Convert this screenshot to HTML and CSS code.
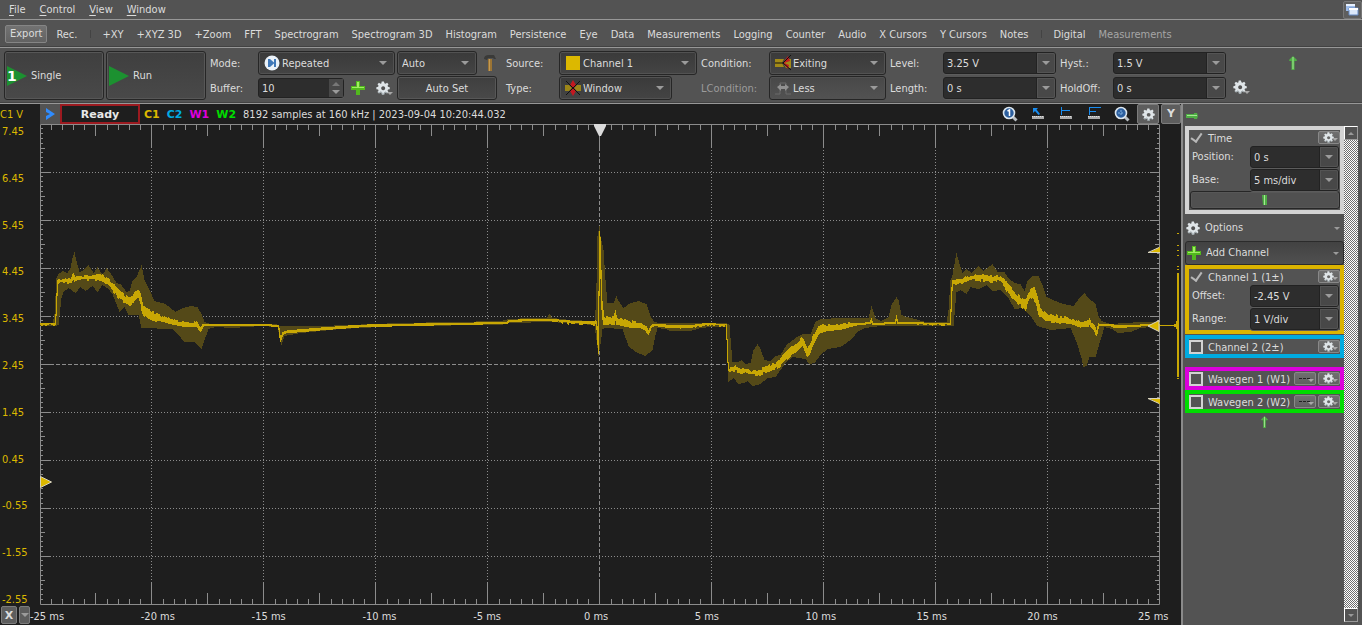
FILE: index.html
```html
<!DOCTYPE html>
<html lang="en">
<head>
<meta charset="utf-8">
<title>Scope</title>
<link rel="stylesheet" href="styles.css">
</head>
<body>
<svg class="defs" aria-hidden="true">
  <symbol id="gear" viewBox="0 0 16 16"><path fill-rule="evenodd" d="M6.500 0.500h2.600l.5 2 1.300.5 1.800-1.100 1.600 1.800-1.100 1.700.5 1.200 2 .4v2.300l-2 .4-.5 1.300 1.100 1.700-1.600 1.600-1.700-1.100-1.300.5-.4 2H6.800l-.4-2-1.300-.5-1.700 1.100-1.700-1.700 1.200-1.700-.5-1.200-2-.4V7l2-.4.5-1.200-1.200-1.700 1.700-1.600 1.700 1.100 1-.4zM8.200 6a2.300 2.300 0 1 0 .01 0z" fill="#dfe5e8"/><path d="M2.500 12.500l1.200 1 1.700-1 1.200.5.500 2.200h2l.5-2 1.300-.5 1.700 1" fill="none" stroke="#8d979c"/></symbol>
  <symbol id="plus" viewBox="0 0 14 14"><path d="M5 0h4v5h5v4H9v5H5V9H0V5h5z" fill="#52b81e"/><path d="M6 1h2v5h5v1H1V6h5z" fill="#a0ee62"/></symbol>
  <symbol id="arrow" viewBox="0 0 8 14"><path d="M4 0l4 4-.5 1H5.500v9h-3V5H.5L0 4z" fill="#4fae45"/><path d="M4 1v12" stroke="#a6e894"/></symbol>
  <symbol id="lens" viewBox="0 0 16 16"><path d="M10 10l4.500 4.500" stroke="#b9bec2" stroke-width="3"/><circle cx="7" cy="7" r="5.500" fill="#2c5f9f" stroke="#dce6ee" stroke-width="1.600"/></symbol>
</svg>

<nav class="menubar">
  <button><u>F</u>ile</button><button><u>C</u>ontrol</button><button><u>V</u>iew</button><button><u>W</u>indow</button>
  <button class="restore" aria-label="Restore window"><svg width="14" height="14" viewBox="0 0 14 14"><path d="M1 1h9v7H1z" fill="#9dbbe8"/><path d="M1 1h9v2H1z" fill="#e8f1ff"/><path d="M4 5h9v7H4z" fill="#dbe8fa" stroke="#6589c4"/><path d="M4 5h9v2H4z" fill="#fff"/></svg></button>
</nav>

<nav class="views">
  <button class="raised">Export</button><button>Rec.</button><i></i><button>+XY</button><button>+XYZ 3D</button><button>+Zoom</button><button>FFT</button><button>Spectrogram</button><button>Spectrogram 3D</button><button>Histogram</button><button>Persistence</button><button>Eye</button><button>Data</button><button>Measurements</button><button>Logging</button><button>Counter</button><button>Audio</button><button>X Cursors</button><button>Y Cursors</button><button>Notes</button><i></i><button>Digital</button><button disabled>Measurements</button>
</nav>

<section class="controls">
  <button class="big"><svg width="20" height="20" viewBox="0 0 20 20"><path d="M0 0l20 10L0 20z" fill="#1c9130"/><text x="0" y="15" class="one">1</text></svg>Single</button>
  <button class="big"><svg width="20" height="20" viewBox="0 0 20 20"><path d="M0 0l20 10L0 20z" fill="#1c9130"/></svg>Run</button>

  <div class="group acquire">
    <label for="mode">Mode:</label>
    <div class="drop icon"><svg width="16" height="16" viewBox="0 0 16 16"><circle cx="8" cy="8" r="7.500" fill="#eaf1f8"/><path d="M4 4h2v8H4zM10 4h2v8h-2zM6 4l4.500 4L6 12z" fill="#3f78b8"/></svg><select id="mode"><option>Repeated</option></select></div>
    <label for="buffer">Buffer:</label>
    <div class="line"><div class="spin"><input id="buffer" value="10"><span class="steps"><button aria-label="Increase" class="up"></button><button aria-label="Decrease" class="down"></button></span></div><button class="flat" aria-label="Add buffer"><svg width="14" height="14"><use href="#plus"/></svg></button><button class="flat gearbtn" aria-label="Buffer options"><svg width="14" height="14"><use href="#gear"/></svg></button></div>
  </div>

  <div class="group auto">
    <div class="line"><div class="drop"><select aria-label="Trigger mode"><option>Auto</option></select></div><svg width="14" height="18" viewBox="0 0 14 18"><path d="M1 5q0-4 5-4h5l2 4h-2l-1-1H5L4 6z" fill="#3a3a38"/><path d="M5 5h4v12H5z" fill="#9b7434"/><path d="M6 5h1v12H6z" fill="#c39a55"/></svg></div>
    <button class="push">Auto Set</button>
  </div>

  <div class="group source">
    <label for="source">Source:</label>
    <div class="drop icon"><svg width="16" height="16" viewBox="0 0 16 16"><path d="M1 1h14v14H1z" fill="#dcb800"/></svg><select id="source"><option>Channel 1</option></select></div>
    <label for="type">Type:</label>
    <div class="drop icon type"><svg width="16" height="16" viewBox="0 0 16 16"><path d="M0 5h4l3 3-3 3H0zM16 5h-4L9 8l3 3h4z" fill="#9c8617"/><path d="M8 0l3 5-2 3 2 3-3 5-3-5 2-3-2-3z" fill="#c31820"/><path d="M1 1l14 14M15 1L1 15" stroke="#111"/></svg><select id="type"><option>Window</option></select></div>
  </div>

  <div class="group cond">
    <label for="condition">Condition:</label>
    <div class="drop icon"><svg width="16" height="16" viewBox="0 0 16 16"><path d="M0 4h9l-2 4 2 4H0z" fill="#a28a17"/><path d="M11 4h5v9h-5L8 8z" fill="#a28a17"/><path d="M13 1l2 5-6 2 5 2-1 4-5-6z" fill="#c31820"/><path d="M0 8h8l8-8M8 8l8 7" stroke="#111" fill="none"/></svg><select id="condition"><option>Exiting</option></select></div>
    <label for="lcondition" class="dim">LCondition:</label>
    <div class="drop icon soft"><svg width="16" height="16" viewBox="0 0 16 16"><path d="M0 14h5V3h6v11h5" stroke="#6b6b6b" fill="none"/><path d="M2 7l4-3v2h4V4l4 3-4 4V9H6v2z" fill="#919191"/></svg><select id="lcondition"><option>Less</option></select></div>
  </div>

  <div class="group level">
    <label for="level">Level:</label><div class="combo"><input id="level" value="3.25 V"><button aria-label="Level values"></button></div>
    <label for="length">Length:</label><div class="combo"><input id="length" value="0 s"><button aria-label="Length values"></button></div>
  </div>
  <div class="group level">
    <label for="hyst">Hyst.:</label><div class="combo"><input id="hyst" value="1.5 V"><button aria-label="Hysteresis values"></button></div>
    <label for="holdoff">HoldOff:</label><div class="combo"><input id="holdoff" value="0 s"><button aria-label="Hold off values"></button></div>
  </div>
  <button class="flat gearbtn low" aria-label="Trigger options"><svg width="14" height="14"><use href="#gear"/></svg></button>
  <svg class="pin" width="8" height="14"><use href="#arrow"/></svg>
</section>

<main>
  <section class="scope">
    <div class="unit">C1 V</div>
    <header class="status">
      <button class="chev" aria-label="Expand"><svg width="11" height="14" viewBox="0 0 11 14"><path d="M1 1l9 6-9 6V9l4-2-4-2z" fill="#2f8cff"/></svg></button>
      <strong class="ready">Ready</strong>
      <b class="c1">C1</b><b class="c2">C2</b><b class="w1">W1</b><b class="w2">W2</b>
      <span class="info">8192 samples at 160 kHz | 2023-09-04 10:20:44.032</span>
      <span class="tools">
        <button aria-label="Zoom 1"><svg width="16" height="16"><use href="#lens"/><path d="M5.500 5L7.500 4v6" stroke="#fff" stroke-width="1.500" fill="none"/></svg></button>
        <button aria-label="Cursor"><svg width="14" height="14" viewBox="0 0 14 14"><path d="M2 1h5L5.500 2.500 9 7 7.500 8 4 4 2 6z" fill="#188cf0"/><path d="M1 9h12v3H1z" fill="#aaa"/><path d="M1 9.500h12" stroke="#ddd" stroke-dasharray="1 1"/></svg></button>
        <button aria-label="X cursor"><svg width="14" height="14" viewBox="0 0 14 14"><path d="M2.500 0v8M2 3.500h9" stroke="#188cf0" fill="none"/><path d="M1 9h12v3H1z" fill="#aaa"/><path d="M1 9.500h12" stroke="#ddd" stroke-dasharray="1 1"/></svg></button>
        <button aria-label="Measure"><svg width="14" height="14" viewBox="0 0 14 14"><path d="M2.500 0v8M2 .5h12M2 4.500h7" stroke="#188cf0" fill="none"/><path d="M1 9h12v3H1z" fill="#aaa"/><path d="M1 9.500h12" stroke="#ddd" stroke-dasharray="1 1"/></svg></button>
        <button aria-label="Zoom fit"><svg width="16" height="16"><use href="#lens"/><path d="M4 7h6M7 4v6" stroke="#7fb0df" stroke-dasharray="2 1"/></svg></button>
        <button class="tile" aria-label="Plot options"><svg width="13" height="13"><use href="#gear"/></svg></button>
        <button class="tile">Y</button>
      </span>
    </header>
    <div class="yaxis"><span>7.45</span><span>6.45</span><span>5.45</span><span>4.45</span><span>3.45</span><span>2.45</span><span>1.45</span><span>0.45</span><span>-0.55</span><span>-1.55</span><span>-2.55</span></div>
    <svg class="plot" viewBox="40 124 1141 481" preserveAspectRatio="none" role="img" aria-label="Channel 1 waveform">
      <g id="grid"></g>
      <path id="envelope" fill="#544918"/>
      <path id="trace" fill="#c8a704"/>
      <g id="side" fill="#c8a704"></g>
      <path d="M594 124h12v2l-5 10h-2l-5-10z" fill="#dcdcdc"/>
      <path d="M40.500 476.500v11L51.500 482z" fill="#dcb800" stroke="#d8d3bd"/>
      <path d="M1159 320.500v11l-11-5.500z" fill="#dcb800" stroke="#d8d3bd"/>
      <path d="M1160 247v6h-12z" fill="#dcb800"/><path d="M1159 247.500l-11 5h12" fill="none" stroke="#d8d3bd"/>
      <path d="M1160 404v-6h-12z" fill="#dcb800"/><path d="M1159 403.500l-11-5h12" fill="none" stroke="#d8d3bd"/>
    </svg>
    <div class="axisbtns"><button class="tile x">X</button><button class="tile mini" aria-label="X axis menu"></button></div>
    <div class="xaxis"><span>-25 ms</span><span>-20 ms</span><span>-15 ms</span><span>-10 ms</span><span>-5 ms</span><span>0 ms</span><span>5 ms</span><span>10 ms</span><span>15 ms</span><span>20 ms</span><span>25 ms</span></div>
  </section>

  <aside class="side">
    <div class="sidehead"><svg width="12" height="6" viewBox="0 0 12 6"><path d="M0 1h8V0h3l1 3-1 3H8V5H0z" fill="#4fae45"/><path d="M1 2.500h10" stroke="#a6e894"/></svg></div>
    <div class="sidebody">
      <div class="panels">
        <fieldset class="card time">
          <div class="head"><input type="checkbox" id="time" class="tick" checked><label for="time">Time</label><button class="opt gearbtn" aria-label="Time options"><svg width="11" height="11"><use href="#gear"/></svg></button></div>
          <div class="row"><label for="pos">Position:</label><div class="combo"><input id="pos" value="0 s"><button aria-label="Position values"></button></div></div>
          <div class="row"><label for="base">Base:</label><div class="combo"><input id="base" value="5 ms/div"><button aria-label="Base values"></button></div></div>
          <button class="push wide" aria-label="Collapse"><svg width="5" height="12" viewBox="0 0 5 12"><path d="M0 1h5v10H1z" fill="#4fae45"/><path d="M2.500 1v10" stroke="#a6e894"/></svg></button>
        </fieldset>
        <button class="menu"><svg width="14" height="14"><use href="#gear"/></svg>Options</button>
        <button class="menu add"><svg width="14" height="14"><use href="#plus"/></svg>Add Channel</button>
        <fieldset class="card ch1">
          <div class="head"><input type="checkbox" id="ch1" class="tick" checked><label for="ch1">Channel 1 (1±)</label><button class="opt gearbtn" aria-label="Channel 1 options"><svg width="11" height="11"><use href="#gear"/></svg></button></div>
          <div class="row"><label for="offset">Offset:</label><div class="combo"><input id="offset" value="-2.45 V"><button aria-label="Offset values"></button></div></div>
          <div class="row"><label for="range">Range:</label><div class="combo"><input id="range" value="1 V/div"><button aria-label="Range values"></button></div></div>
        </fieldset>
        <fieldset class="card ch2"><div class="head"><input type="checkbox" id="ch2" class="box"><label for="ch2">Channel 2 (2±)</label><button class="opt gearbtn" aria-label="Channel 2 options"><svg width="11" height="11"><use href="#gear"/></svg></button></div></fieldset>
        <fieldset class="card wg1"><div class="head"><input type="checkbox" id="wg1" class="box"><label for="wg1">Wavegen 1 (W1)</label><button class="opt gearbtn" aria-label="Wavegen 1 shape"><svg width="11" height="3"><path d="M0 1.500h11" stroke="#222" stroke-dasharray="3 1"/></svg></button><button class="opt gearbtn" aria-label="Wavegen 1 options"><svg width="11" height="11"><use href="#gear"/></svg></button></div></fieldset>
        <fieldset class="card wg2"><div class="head"><input type="checkbox" id="wg2" class="box"><label for="wg2">Wavegen 2 (W2)</label><button class="opt gearbtn" aria-label="Wavegen 2 shape"><svg width="11" height="3"><path d="M0 1.500h11" stroke="#222" stroke-dasharray="3 1"/></svg></button><button class="opt gearbtn" aria-label="Wavegen 2 options"><svg width="11" height="11"><use href="#gear"/></svg></button></div></fieldset>
        <svg class="endpin" width="7" height="12"><use href="#arrow"/></svg>
      </div>
      <div class="scroll"><button class="up" aria-label="Scroll up"></button><button class="down" aria-label="Scroll down"></button></div>
    </div>
  </aside>
</main>
<script src="plot.js"></script>
</body>
</html>
```

FILE: styles.css
```css
* { box-sizing: border-box; }
body {
  margin: 0; min-height: 100vh; display: flex; flex-direction: column;
  background: #535353; color: #dcdcdc;
  font: 11px/14px "DejaVu Sans Condensed", Tahoma, "Noto Sans", sans-serif;
}
button, input, select { font: inherit; color: inherit; margin: 0; padding: 0; border: 0; background: none; border-radius: 0; }
svg { display: block; flex: none; }
.defs { position: absolute; width: 0; height: 0; }

.menubar { display: flex; align-items: center; height: 20px; padding-left: 2px; border-bottom: 1px solid #979797; }
.menubar button { padding: 0 7px; }
.menubar u { text-underline-offset: 2px; }
.menubar .restore { margin-left: auto; padding: 1px; border: 1px solid #777; border-radius: 2px; background: #5e5e5e; height: 18px; width: 19px; }

.views { display: flex; align-items: center; height: 28px; padding: 0 5px; border-bottom: 1px solid #979797; box-shadow: inset 0 -1px #424242; white-space: nowrap; }
.views button { padding: 2px 6px 0; height: 18px; margin-right: 1px; }
.views .raised { border: 1px solid #858585; border-radius: 2px; background: linear-gradient(#727272, #626262); padding: 1px 4px 0; margin-right: 3px; }
.views i { width: 1px; height: 8px; margin: 0 5px 0 6px; background: #434343; }
.views button:disabled { color: #a6a6a6; }

.controls { display: flex; align-items: flex-start; height: 56px; padding: 3px 4px 0; border-bottom: 1px solid #979797; box-shadow: inset 0 -1px #424242; }
.controls > * { flex: none; }
.controls label { padding-top: 2px; }
.big, .push { border: 1px solid #262626; border-radius: 3px; background: linear-gradient(#3f3f3f, #494949); box-shadow: inset 0 0 0 1px #575757; }
.big { display: flex; align-items: center; gap: 4px; width: 100px; height: 49px; margin-right: 2px; padding-left: 2px; }
.one { font: bold 14px/14px "DejaVu Sans", sans-serif; fill: #fff; }
.group { display: grid; grid-template-rows: 24px 24px; row-gap: 1px; align-items: center; height: 49px; }
.acquire { grid-template-columns: 48px 137px; margin: 0 2px; }
.auto { grid-template-columns: 100px; margin-right: 9px; }
.source { grid-template-columns: 53px 138px; margin-right: 4px; }
.cond { grid-template-columns: 68px 117px; margin-right: 4px; }
.level { grid-template-columns: 53px 113px; margin-right: 4px; }
.dim { color: #9b9b9b; }
.drop { position: relative; height: 24px; border: 1px solid #262626; border-radius: 3px; background: linear-gradient(#3a3a3a, #444); box-shadow: inset 0 0 0 1px #525252; }
.drop.soft { background: linear-gradient(#484848, #525252); }
.drop.type { width: 113px; }
.drop select { appearance: none; width: 100%; height: 100%; padding: 2px 20px 0 4px; }
.drop.icon select { padding-left: 23px; }
.drop > svg { position: absolute; left: 5px; top: 3px; }
.drop::after, .combo button::after, .menu::after, .mini::after { content: ""; border: 4px solid transparent; border-top-color: #9b9b9b; border-bottom: 0; }
.drop::after { position: absolute; right: 7px; top: 9px; pointer-events: none; }
.line { display: flex; align-items: center; }
.auto .drop { width: 80px; margin-right: 6px; }
.push { height: 24px; padding-top: 2px; }
.flat { display: flex; margin-left: 7px; }
.gearbtn { position: relative; }
.gearbtn::after { content: ""; position: absolute; right: -3px; bottom: 0; border: 3px solid transparent; border-top-color: #a8a8a8; border-bottom: 0; }
.acquire .gearbtn { margin-left: 11px; }
.low { margin: 29px 0 0 3px; }
.pin { margin: 5px 0 0 42px; }
.spin, .combo { display: flex; min-width: 0; height: 22px; border: 1px solid #222; border-radius: 3px; background: #2d2d2d; box-shadow: 0 1px #5c5c5c; }
.spin { width: 86px; height: 20px; }
.spin input, .combo input { flex: 1; width: 0; min-width: 0; padding: 2px 0 0 3px; }
.steps { width: 14px; background: #484848; display: flex; flex-direction: column; align-items: center; justify-content: space-evenly; }
.steps button { border: 4px solid transparent; }
.steps .up, .scroll .up::after { border-bottom-color: #777; border-top: 0; }
.steps .down { border-top-color: #9b9b9b; border-bottom: 0; }
.combo button { flex: none; width: 19px; display: flex; align-items: center; justify-content: center; background: #484848; border-left: 1px solid #222; box-shadow: inset 0 0 0 1px #545454; border-radius: 0 2px 2px 0; }

main { flex: 1; display: flex; }
.scope { flex: 1; min-width: 0; display: grid; grid-template: 20px 1fr 20px / 40px 1fr; background: #1e1e1e; }
.unit { color: #dcb800; align-self: center; padding-top: 2px; }
.status { display: flex; align-items: center; white-space: nowrap; }
.chev { display: flex; align-items: center; justify-content: center; align-self: stretch; width: 20px; background: #535353; }
.ready { width: 80px; height: 20px; border: 2px solid #9c1a20; text-align: center; line-height: 18px; margin-right: 4px; color: #e8e8e8; }
.status b, .ready { font-family: "DejaVu Sans", sans-serif; font-size: 11px; }
.status b { margin-right: 7px; line-height: 20px; padding-top: 1px; }
.c1 { color: #dcb800; } .c2 { color: #00abe3; } .w1 { color: #dc00dc; } .w2 { color: #00dc00; }
.info { padding-top: 2px; }
.tools { margin-left: auto; display: flex; align-items: center; }
.tools button { width: 28px; height: 20px; display: flex; align-items: center; justify-content: center; }
.tools .tile { width: 22px; margin-left: 1px; }
.tools .tile:last-child { width: 20px; margin-left: 2px; }
.tile { background: #5d5d5d; border: 1px solid #7c7c7c; border-radius: 2px; font: bold 11px/14px "DejaVu Sans", sans-serif; }
.yaxis { display: flex; flex-direction: column; justify-content: space-between; color: #dcb800; padding-left: 2px; margin: 1px 0 -2px; }
.plot { width: 100%; height: 100%; min-height: 0; overflow: visible; }
.axisbtns { display: flex; gap: 2px; padding: 1px 0 1px 1px; }
.axisbtns .x { width: 16px; padding-top: 2px; }
.axisbtns .mini { display: flex; width: 11px; padding: 0; align-items: center; justify-content: center; }
.xaxis { display: flex; align-items: center; margin: 3px 13px 0 -10px; white-space: nowrap; }
.xaxis span { flex: 1; }
.xaxis span:last-child { flex: none; width: 30px; }

.side { width: 181px; border-left: 2px solid #8a8a8a; display: flex; flex-direction: column; }
.sidehead { height: 22px; padding: 9px 3px; }
.sidebody { flex: 1; display: flex; padding: 0 4px 3px 2px; }
.panels { flex: 1; min-width: 0; display: flex; flex-direction: column; }
.card { min-width: 0; margin: 0 0 1px; padding: 0; border: 4px solid #d3d3d3; }
.time { padding-bottom: 1px; }
.ch1 { border-color: #dcb400; }
.ch2 { border-color: #00abe0; margin-bottom: 9px; }
.wg1 { border-color: #dc00dc; margin-bottom: 0; }
.wg2 { border-color: #00dc00; }
.head { display: flex; align-items: center; height: 15px; gap: 2px; }
.head label { flex: 1; white-space: nowrap; padding-top: 2px; }
.head input { appearance: none; flex: none; width: 14px; height: 14px; margin-right: 3px; }
.head .box { border: 2px solid #d3d3d3; }
.tick::before { content: ""; display: block; width: 5px; height: 9px; margin-left: 4px; border: solid #b8b8b8; border-width: 0 2px 2px 0; transform: rotate(35deg); }
.head .tick { display: flex; align-items: flex-start; }
.opt { display: flex; align-items: center; width: 22px; height: 13px; padding-left: 4px; border: 1px solid #888; border-radius: 2px; background: linear-gradient(#707070, #606060); }
.head .opt { padding-left: 4px; border: 1px solid #888; }
.opt::after { right: 1px; bottom: 2px; }
.row { display: grid; grid-template-columns: 58px minmax(0, 1fr); align-items: center; height: 23px; padding: 0 1px 0 3px; }
.wide { display: flex; align-items: center; justify-content: center; width: 150px; height: 18px; margin: 0 auto; padding: 0; background: #505050; }
.menu { display: flex; align-items: center; gap: 5px; height: 26px; padding: 0 4px 0 1px; }
.menu::after { margin-left: auto; border-width: 3px 3px 0; }
.add { height: 24px; border: 1px solid #2b2b2b; border-radius: 3px; background: linear-gradient(#424242, #505050); }
.endpin { margin: 2px auto 0; }
.scroll { width: 14px; display: flex; flex-direction: column; justify-content: space-between; background: repeating-conic-gradient(#fff 0 25%, #6e6e6e 0 50%) 0 0 / 2px 2px; }
.scroll button { width: 14px; height: 14px; display: flex; align-items: center; justify-content: center; background: #535353; border: 1px solid; border-color: #fff #999 #999 #fff; }
.scroll button::after { content: ""; border: 3px solid transparent; }
.scroll .up::after { border-top: 0; border-bottom-color: #999; }
.scroll .down::after { border-top-color: #999; border-bottom: 0; }
```

FILE: plot.js
```js
const el = id => document.getElementById(id);
const color = '#8c8c8c';

// Graticule: frame, ticks and dotted divisions.
let solid = '';
const X0 = 39, Y0 = 124, W = 1120, H = 480;
for (let i = 1; i < 100; i++) {
  const x = Math.floor(X0 + i * W / 100) + .5 + (i % 5 ? 1 : 0);
  const y = Math.floor(Y0 + i * H / 100) + .5;
  const lx = i % 10 === 0 ? 22 : i % 5 === 0 ? 11 : 5;
  const ly = i % 10 === 0 ? 9 : i % 5 === 0 ? 4 : 2;
  solid += `M${x} 125v${lx}M${x} 604v-${lx}M41 ${y}h${ly}M1159 ${y}h-${ly}`;
}
let grid = `<path d="M40.500 124.500H1159.500V604.500H40.500z${solid}" fill="none" stroke="${color}"/>`;
for (let i = 1; i < 10; i++) {
  const dash = i === 5 ? '4 2' : '1 2';
  grid += `<path d="M${X0 + i * 112}.5 147V582M50 ${Y0 + i * 48}.5H1150" stroke="${color}" stroke-dasharray="${dash}"/>`;
}
el('grid').innerHTML = grid;

// "x:y" pairs, linearly interpolated per pixel column.
const parse = s => s.trim().split(/\s+/).map(p => p.split(':').map(Number));
function at(points, x) {
  for (let i = 1; i < points.length; i++) {
    const [a, b] = [points[i - 1], points[i]];
    if (x <= b[0]) return a[1] + (b[1] - a[1]) * (x - a[0]) / (b[0] - a[0]);
  }
  return points[points.length - 1][1];
}
function band(top, bottom) {
  let up = '', down = '';
  for (let x = 40; x < 1160; x++) {
    const t = Math.round(top(x)), b = Math.max(Math.round(bottom(x)), t + 1);
    up += `L${x} ${t}H${x + 1}`;
    down = `L${x + 1} ${b}H${x}` + down;
  }
  return 'M' + up.slice(1) + down + 'z';
}

const high = parse(`40:323 52:323 54:314 56:278 58:274 62:271 67:273 70:268 72:258 74:252 76:261 79:272 83:270 88:265 93:273 97:267 102:275 106:268 110:273 116:283 120:284 126:292 129:291 132:281 136:277 139:270 141:265 144:280 150:292 154:301 165:304 175:312 182:308 190:306 197:307 201:314 204:322 210:324 276:324 280:326 320:326 400:323 500:321 508:319 530:318 546:318 549:314 552:318 570:320 594:321 595:310 596:283 597:236 599:226 600:236 603:250 605:280 607:303 613:303 616:296 618:301 623:308 630:303 638:301 646:304 650:316 654:322 660:323 726:323 729:325 731:350 732:362 738:362 741:360 745:364 750:363 753:350 757:344 760:349 764:360 770:361 775:356 780:355 786:345 795:338 802:334 810:334 815:322 820:319 840:318 868:318 871:306 875:318 880:321 888:317 891:305 896:297 898:300 901:315 906:317 915:319 925:322 946:322 948:310 950:280 952:275 955:258 956:253 959:264 962:273 966:269 971:273 978:266 983:271 992:264 997:272 1004:272 1008:278 1014:283 1020:284 1024:291 1027:281 1032:276 1038:276 1042:285 1046:297 1055:301 1063:304 1073:306 1079:298 1084:293 1088:298 1095:304 1098:316 1101:321 1110:324 1140:322 1160:322`);
const low = parse(`40:326 55:326 58:325 61:298 63:292 68:288 75:293 80:287 85:291 92:286 97:292 102:285 108:289 112:294 116:304 119:312 124:307 128:315 138:315 141:328 172:329 178:335 184:342 194:342 201:349 204:340 208:329 215:327 232:328 260:326 277:327 281:345 284:336 300:333 340:329 400:326 500:325 510:323 550:322 594:325 596:340 598:356 600:344 602:329 605:328 622:329 628:346 635:352 645:356 652:350 655:335 657:328 665:329 670:331 690:331 700:328 711:327 726:327 728:382 733:378 738:384 743:383 747:381 752:386 760:384 767:378 775:377 780:370 785:363 792:357 805:359 809:364 814:363 820:355 827:349 840:347 850:340 858:331 865:328 880:326 953:326 956:292 960:290 966:294 970:287 978:289 986:285 992:291 1000:290 1008:298 1014:309 1022:308 1030:316 1037:326 1050:330 1070:328 1076:342 1081:358 1083:367 1086:366 1089:357 1095:357 1100:340 1104:327 1112:329 1117:333 1130:332 1140:328 1160:326`);
const mid = parse(`40:324 55:324 56:306 57:282 60:281 71:281 72:277 73:274 74:279 78:278 100:278 107:281 112:287 118:294 124:299 130:303 134:297 138:294 140:298 142:309 145:313 152:316 160:319 172:322 182:324 197:325 200:330 203:325 207:325 265:325 278:326 279:332 280:341 282:334 285:332 320:329 360:326 400:325 450:324 507:323 508:321 530:320 550:320 570:322 596:323 597:335 598:352 599:233 600:249 601:300 603:320 614:321 615:314 616:321 632:325 640:325 645:328 648:333 651:326 655:325 665:326 680:327 695:326 705:324 725:325 726:325 727:355 728:371 730:370 736:368 740:371 744:370 750:373 757:373 765:370 775:366 785:357 792:350 800:344 802:341 804:346 807:353 810:348 814:338 818:330 825:328 840:327 850:325 860:324 870:323 871:319 872:324 895:323 896:316 897:323 950:324 951:295 952:282 960:281 970:278 978:277 1000:279 1003:282 1008:289 1015:297 1020:301 1025:305 1028:296 1033:292 1036:300 1039:312 1047:318 1060:320 1070:321 1080:325 1088:324 1089:320 1090:324 1094:328 1096:334 1098:325 1110:325 1116:327 1130:326 1150:325 1160:325`);
const width = parse(`40:2 54:2 58:4 90:5 110:7 130:7 150:8 165:5 196:5 204:2 276:2 290:3 508:2 594:3 603:8 640:6 653:2 665:3 695:3 705:2 726:2 730:4 765:5 780:7 810:8 825:7 845:5 858:2 950:2 954:4 1000:6 1020:9 1040:9 1055:7 1072:5 1095:5 1100:2 1118:3 1135:2 1160:2`);

// Fixed pseudo-random sequence, so that the trace looks the same on each load.
const noise = x => { const v = Math.sin(Math.floor(x / 2) * 12.9898) * 43758.5453; return v - Math.floor(v) - .5; };
const rough = x => at(width, x) > 3 ? noise(x) * at(width, x) * .45 : 0;
// On steep edges each column spans to its neighbour.
const near = (x, f) => f(at(mid, x), (at(mid, x) + at(mid, x + 1)) / 2, (at(mid, x) + at(mid, x - 1)) / 2);

el('envelope').setAttribute('d', band(x => at(high, x), x => at(low, x)));
el('trace').setAttribute('d', band(
  x => near(x, Math.min) - at(width, x) / 2 + rough(x),
  x => near(x, Math.max) + at(width, x) / 2 + rough(x + 37)
));

// Voltage histogram beside the plot.
let bars = '<path d="M1160 325h14v-1h2v-3h1V273h2v104h-2v-48h-1v-2h-2v-1h-14z"/>';
for (const y of [233, 245, 250, 255, 266, 269, 378]) bars += `<path d="M1177 ${y}h2v1h-2z"/>`;
el('side').innerHTML = bars;
```
